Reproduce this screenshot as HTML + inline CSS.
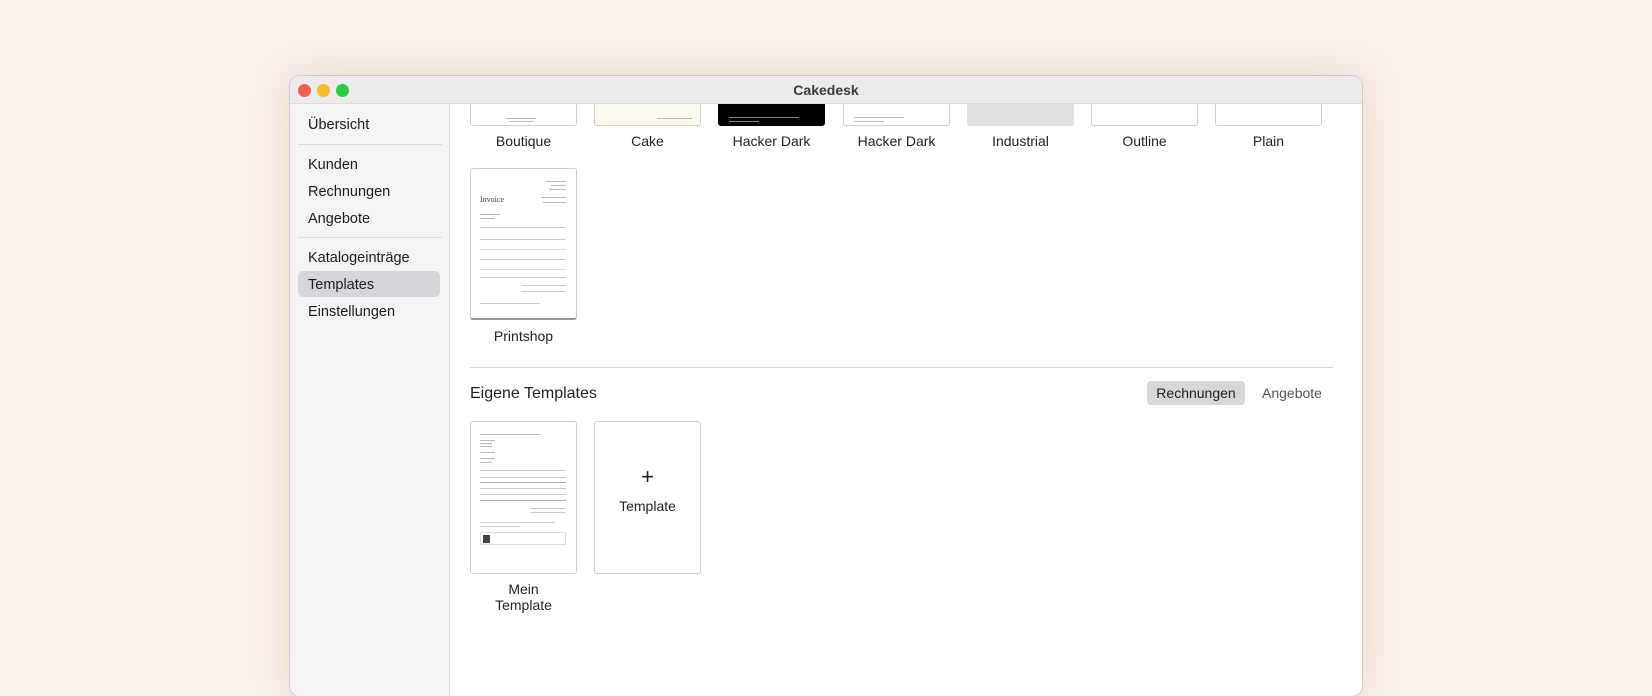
<!DOCTYPE html>
<html><head><meta charset="utf-8"><style>
*{margin:0;padding:0;box-sizing:border-box}
body{width:1652px;height:630px;overflow:hidden;background:#f9f0ea;font-family:"Liberation Sans",sans-serif;color:#222;position:relative}
.win{position:absolute;left:290px;top:76px;width:1072px;height:620px;background:#fff;border-radius:10px;box-shadow:0 0 40px rgba(160,110,80,.18),0 0 0 1px rgba(0,0,0,.12);overflow:hidden}
.tb{position:absolute;left:0;top:0;width:100%;height:28px;background:#ececee;border-bottom:1px solid #dcdcdc;z-index:5}
.dot{position:absolute;top:8px;width:13px;height:13px;border-radius:50%}
.title{position:absolute;left:0;right:0;top:6px;text-align:center;font-weight:bold;font-size:14px;color:#3a3a3a}
.side{position:absolute;left:0;top:28px;width:160px;bottom:0;background:#f4f4f6;border-right:1px solid #dedede}
.it{position:absolute;left:18px;font-size:14.5px;color:#1a1a1a}
.hr{position:absolute;left:8px;width:144px;height:1px;background:#dcdcdc}
.sel{position:absolute;left:8px;top:167px;width:142px;height:26px;background:#d6d6da;border-radius:5px}
.card{position:absolute;width:107px;border:1px solid #cfcfcf;border-radius:3px;background:#fff}
.lab{position:absolute;width:107px;text-align:center;font-size:14px;color:#222}
.l{position:absolute;height:1px;background:#bbb}
</style></head><body>
<div class="win">
 <div class="tb">
  <div class="dot" style="left:8px;background:#ee5e57"></div>
  <div class="dot" style="left:27px;background:#f5bd2e"></div>
  <div class="dot" style="left:46px;background:#2fc742"></div>
  <div class="title">Cakedesk</div>
 </div>
 <div class="side">
  <div class="it" style="top:13px">Übersicht</div>
  <div class="hr" style="top:40px"></div>
  <div class="sel"></div>
  <div class="it" style="top:53px">Kunden</div>
  <div class="it" style="top:80px">Rechnungen</div>
  <div class="it" style="top:107px">Angebote</div>
  <div class="hr" style="top:133px"></div>
  <div class="it" style="top:146px">Katalogeinträge</div>
  <div class="it" style="top:173px">Templates</div>
  <div class="it" style="top:200px">Einstellungen</div>
 </div>
 <div class="card" style="left:180px;top:0;height:50px"><div class="l" style="left:35px;top:41px;width:30px"></div><div class="l" style="left:38px;top:44px;width:25px"></div></div>
 <div class="card" style="left:304px;top:0;height:50px;background:#fdf9ec"><div class="l" style="left:62px;top:41px;width:35px"></div></div>
 <div class="card" style="left:428px;top:0;height:50px;background:#000;border-color:#000"><div class="l" style="left:10px;top:40px;width:70px;background:#888"></div><div class="l" style="left:10px;top:44px;width:30px;background:#888"></div></div>
 <div class="card" style="left:553px;top:0;height:50px"><div class="l" style="left:10px;top:40px;width:50px"></div><div class="l" style="left:10px;top:44px;width:30px"></div></div>
 <div class="card" style="left:677px;top:0;height:50px;background:#e0e0e0;border-color:#e0e0e0"></div>
 <div class="card" style="left:801px;top:0;height:50px"></div>
 <div class="card" style="left:925px;top:0;height:50px"></div>
 <div class="lab" style="left:180px;top:57px">Boutique</div>
 <div class="lab" style="left:304px;top:57px">Cake</div>
 <div class="lab" style="left:428px;top:57px">Hacker Dark</div>
 <div class="lab" style="left:553px;top:57px">Hacker Dark</div>
 <div class="lab" style="left:677px;top:57px">Industrial</div>
 <div class="lab" style="left:801px;top:57px">Outline</div>
 <div class="lab" style="left:925px;top:57px">Plain</div>
 <div class="card" style="left:180px;top:92px;height:152px;border-bottom:2px solid #999">
  <div style="position:absolute;left:9px;top:26px;font-family:'Liberation Serif',serif;font-size:8px;color:#444">Invoice</div>
  <div class="l" style="left:75px;top:12px;width:20px"></div><div class="l" style="left:80px;top:16px;width:15px"></div><div class="l" style="left:78px;top:20px;width:17px"></div><div class="l" style="left:70px;top:28px;width:25px"></div><div class="l" style="left:72px;top:33px;width:23px"></div>
  <div class="l" style="left:9px;top:45px;width:20px"></div><div class="l" style="left:9px;top:49px;width:15px"></div><div class="l" style="left:9px;top:58px;width:86px;background:#ccc"></div>
  <div class="l" style="left:9px;top:70px;width:86px;background:#ccc"></div><div class="l" style="left:9px;top:80px;width:86px;background:#ddd"></div><div class="l" style="left:9px;top:90px;width:86px;background:#ccc"></div><div class="l" style="left:9px;top:100px;width:86px;background:#ddd"></div><div class="l" style="left:9px;top:108px;width:86px;background:#ccc"></div><div class="l" style="left:50px;top:116px;width:45px;background:#ccc"></div><div class="l" style="left:50px;top:122px;width:45px;background:#ccc"></div><div class="l" style="left:9px;top:134px;width:60px;background:#ccc"></div>
 </div>
 <div class="lab" style="left:180px;top:252px">Printshop</div>
 <div style="position:absolute;left:180px;top:291px;width:863px;height:1px;background:#d8d8d8"></div>
 <div style="position:absolute;left:180px;top:309px;font-size:16px;font-weight:500;color:#1e1e1e">Eigene Templates</div>
 <div style="position:absolute;left:857px;top:305px;width:98px;height:24px;background:#d7d7da;border-radius:4px;font-size:14px;text-align:center;line-height:24px;color:#1e1e1e">Rechnungen</div>
 <div style="position:absolute;left:963px;top:305px;width:78px;height:24px;font-size:14px;text-align:center;line-height:24px;color:#555">Angebote</div>
 <div class="card" style="left:180px;top:345px;height:153px">
  <div class="l" style="left:9px;top:12px;width:60px"></div><div class="l" style="left:9px;top:18px;width:15px"></div><div class="l" style="left:9px;top:21px;width:12px"></div><div class="l" style="left:9px;top:24px;width:12px"></div><div class="l" style="left:9px;top:30px;width:15px"></div><div class="l" style="left:9px;top:36px;width:15px"></div><div class="l" style="left:9px;top:40px;width:12px"></div>
  <div class="l" style="left:9px;top:48px;width:86px;background:#ccc"></div><div class="l" style="left:9px;top:55px;width:86px;background:#ccc"></div><div class="l" style="left:9px;top:60px;width:86px;background:#aaa"></div><div class="l" style="left:9px;top:66px;width:86px;background:#ccc"></div><div class="l" style="left:9px;top:72px;width:86px;background:#ccc"></div><div class="l" style="left:9px;top:78px;width:86px;background:#aaa"></div><div class="l" style="left:60px;top:86px;width:35px;background:#ccc"></div><div class="l" style="left:60px;top:90px;width:35px;background:#ccc"></div><div class="l" style="left:9px;top:100px;width:75px;background:#ccc"></div><div class="l" style="left:9px;top:104px;width:40px;background:#ccc"></div>
  <div style="position:absolute;left:9px;top:110px;width:86px;height:13px;border:1px solid #ddd"><div style="position:absolute;left:2px;top:2px;width:7px;height:8px;background:#444"></div></div>
 </div>
 <div class="card" style="left:304px;top:345px;height:153px">
  <div style="position:absolute;left:0;right:0;top:44px;text-align:center;font-size:22px;line-height:22px">+</div>
  <div style="position:absolute;left:0;right:0;top:76px;text-align:center;font-size:14px;font-weight:500">Template</div>
 </div>
 <div class="lab" style="left:180px;top:505px;line-height:16px">Mein<br>Template</div>
</div>
</body></html>
